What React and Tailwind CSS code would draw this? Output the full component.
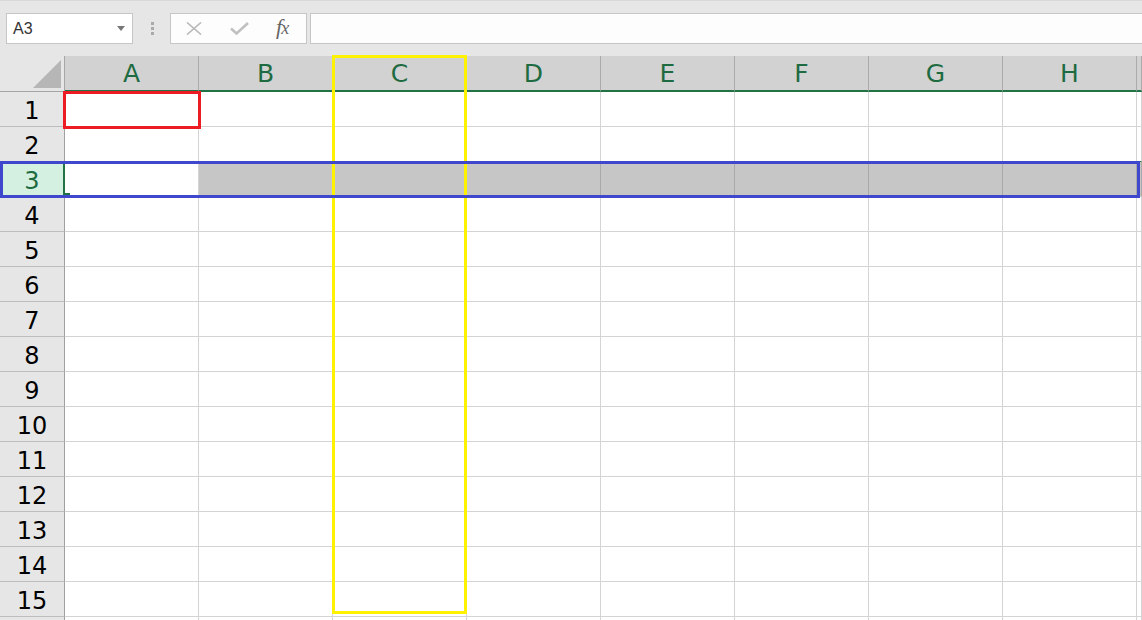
import React from "react";

const COLS = ["A", "B", "C", "D", "E", "F", "G", "H", ""];
const ROWS = Array.from({ length: 16 }, (_, i) => i + 1);

function Toolbar() {
  return (
    <div className="h-[56px] bg-[#e6e6e6] border-t border-[#d9d9d9] flex items-start pt-[12px] pl-[6px]">
      <div className="w-[127px] h-[31px] bg-white border border-[#c6c6c6] flex items-center justify-between pl-[6px] pr-[7px]">
        <span className="text-[16px] text-[#333] font-['Liberation_Sans',sans-serif] leading-none">A3</span>
        <svg width="8" height="5" viewBox="0 0 8 5">
          <path d="M0 0 H8 L4 5 Z" fill="#777" />
        </svg>
      </div>
      <div className="ml-[18px] mt-[9px] flex flex-col gap-[2px]">
        <div className="w-[3px] h-[3px] bg-[#aaaaaa]" />
        <div className="w-[3px] h-[3px] bg-[#aaaaaa]" />
        <div className="w-[3px] h-[3px] bg-[#aaaaaa]" />
      </div>
      <div className="ml-[16px] w-[137px] h-[31px] bg-[#fdfdfd] border border-[#c6c6c6] flex items-center">
        <svg className="ml-[15px]" width="16" height="13" viewBox="0 0 16 13">
          <path d="M1 0.5 L15 12.5 M15 0.5 L1 12.5" stroke="#b8b8b8" strokeWidth="1.6" />
        </svg>
        <svg className="ml-[28px]" width="19" height="13" viewBox="0 0 19 13">
          <path d="M1 6.5 L6.5 11.5 L18 1" stroke="#c0c0c0" strokeWidth="2.6" fill="none" />
        </svg>
        <span className="ml-[27px] text-[22px] italic text-[#666] font-['Liberation_Serif',serif] leading-none -mt-[4px] tracking-[-1px]">
          f<span className="text-[18px]">x</span>
        </span>
      </div>
      <div className="ml-[3px] flex-1 h-[31px] bg-[#fdfdfd] border border-[#c6c6c6] border-r-0" />
    </div>
  );
}

function HeaderRow() {
  return (
    <>
      <div className="h-[36px] bg-[#e6e6e6] border-r border-b border-[#a6a6a6] flex items-end justify-end pr-[3px] pb-[3px]">
        <svg width="28" height="28" viewBox="0 0 28 28">
          <path d="M28 0 L28 28 L0 28 Z" fill="#b6b6b6" />
        </svg>
      </div>
      {COLS.map((c, i) => (
        <div
          key={i}
          className="h-[36px] bg-[#d2d2d2] border-r border-[#ababab] border-b-2 border-b-[#217346] flex items-center justify-center text-[25px] text-[#1e6b41] leading-none pt-[1px]"
        >
          {c}
        </div>
      ))}
    </>
  );
}

function Row({ n }) {
  const sel = n === 3;
  const greenBottom = n === 2;
  return (
    <>
      <div
        className={
          "h-[35px] border-r border-r-[#a0a0a0] border-b border-b-[#bdbdbd] flex items-center justify-center text-[24px] leading-none pt-[3px] " +
          (sel ? "bg-[#d3f0e0] text-[#1e6b41]" : "bg-[#e6e6e6] text-black")
        }
      >
        {n < 16 ? n : ""}
      </div>
      {COLS.map((c, i) => {
        let cls = "h-[35px] border-r border-b ";
        if (sel && i > 0) cls += "bg-[#c6c6c6] border-r-[#a9a9a9] border-b-[#d4d4d4]";
        else cls += "bg-white border-r-[#d4d4d4] " + (greenBottom ? "border-b-[#217346]" : "border-b-[#d4d4d4]");
        return <div key={i} className={cls} />;
      })}
    </>
  );
}

export default function App() {
  return (
    <div className="relative w-[1142px] h-[620px] overflow-hidden bg-white font-['DejaVu_Sans',sans-serif]">
      <Toolbar />
      <div className="grid grid-cols-[65px_repeat(8,134px)_1fr]">
        <HeaderRow />
        {ROWS.map((n) => (
          <Row key={n} n={n} />
        ))}
      </div>

      {/* active cell marker */}
      <div className="absolute left-[63px] top-[161px] w-[2px] h-[34px] bg-[#217346]" />
      <div className="absolute left-[63px] top-[193px] w-[7px] h-[2px] bg-[#217346]" />

      {/* annotation rectangles */}
      <div className="absolute left-[63px] top-[91px] w-[138px] h-[38px] border-[3px] border-[#ed1c24]" />
      <div className="absolute left-[332px] top-[55px] w-[135px] h-[559px] border-[3px] border-[#fff200]" />
      <div className="absolute left-0 top-[161px] w-[1140px] h-[37px] border-[3px] border-[#3f48cc]" />
    </div>
  );
}
